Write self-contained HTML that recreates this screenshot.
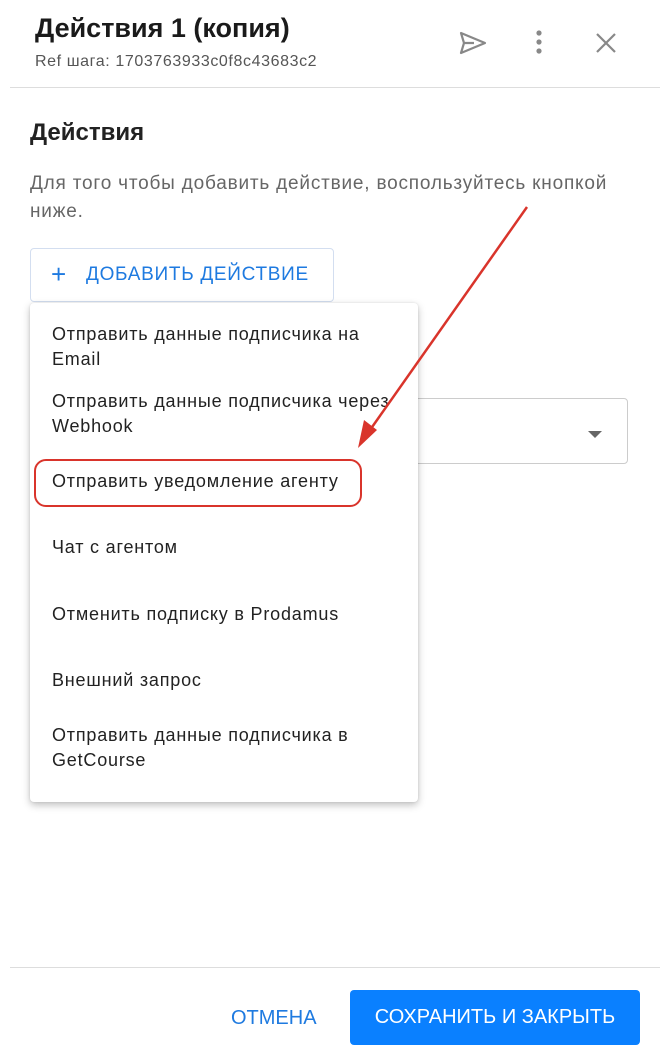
<!DOCTYPE html>
<html><head><meta charset="utf-8"><style>
body{margin:0;width:668px;height:1064px;background:#fff;font-family:"Liberation Sans",Arial,sans-serif;position:relative;overflow:hidden}
.a{position:absolute;white-space:nowrap}
.mi{position:absolute;left:52px;font-size:18px;letter-spacing:0.8px;color:#222;line-height:25px;white-space:nowrap}
</style></head><body>
<div class="a" style="left:35px;top:13px;font-size:27px;font-weight:bold;color:#1a1a1a">Действия 1 (копия)</div>
<div class="a" style="left:35px;top:53px;font-size:16px;letter-spacing:0.6px;color:#555">Ref шага: 1703763933c0f8c43683c2</div>
<svg class="a" style="left:458px;top:30px" width="30" height="26" viewBox="0 0 30 26"><path d="M3 3 L27 13 L3 23 L6 13 Z M6 13 H16" fill="none" stroke="#888" stroke-width="2.2" stroke-linejoin="round"/></svg>
<svg class="a" style="left:533px;top:28px" width="12" height="28"><circle cx="6" cy="5" r="2.6" fill="#888"/><circle cx="6" cy="14" r="2.6" fill="#888"/><circle cx="6" cy="23" r="2.6" fill="#888"/></svg>
<svg class="a" style="left:595px;top:32px" width="22" height="22"><path d="M2 2 L20 20 M20 2 L2 20" stroke="#888" stroke-width="2.2"/></svg>
<div class="a" style="left:10px;top:87px;width:650px;height:1px;background:#ddd"></div>
<div class="a" style="left:30px;top:119px;font-size:24px;font-weight:bold;color:#222">Действия</div>
<div class="a" style="left:30px;top:170px;font-size:19px;letter-spacing:0.8px;color:#666;line-height:28px">Для того чтобы добавить действие, воспользуйтесь кнопкой<br>ниже.</div>
<div class="a" style="left:30px;top:248px;width:304px;height:54px;border:1px solid #d3def0;border-radius:4px;box-sizing:border-box"></div>
<div class="a" style="left:51px;top:261px;font-size:26px;color:#1e7ae0;line-height:26px">+</div>
<div class="a" style="left:86px;top:264px;font-size:19px;color:#1e7ae0;letter-spacing:0.7px">ДОБАВИТЬ ДЕЙСТВИЕ</div>
<div class="a" style="left:400px;top:398px;width:228px;height:66px;border:1px solid #ccc;border-radius:4px;box-sizing:border-box"></div>
<svg class="a" style="left:587px;top:430px" width="16" height="9"><path d="M1 1 H15 L8 8 Z" fill="#666"/></svg>
<div class="a" style="left:30px;top:303px;width:388px;height:499px;background:#fff;border-radius:4px;box-shadow:0 3px 8px rgba(0,0,0,.25),0 0 2px rgba(0,0,0,.1)"></div>
<div class="mi" style="top:322px">Отправить данные подписчика на<br>Email</div>
<div class="mi" style="top:389px">Отправить данные подписчика через<br>Webhook</div>
<div class="mi" style="top:469px">Отправить уведомление агенту</div>
<div class="mi" style="top:535px">Чат с агентом</div>
<div class="mi" style="top:602px">Отменить подписку в Prodamus</div>
<div class="mi" style="top:668px">Внешний запрос</div>
<div class="mi" style="top:723px">Отправить данные подписчика в<br>GetCourse</div>
<div class="a" style="left:34px;top:459px;width:328px;height:48px;border:2.5px solid #d9342b;border-radius:12px;box-sizing:border-box"></div>
<svg class="a" style="left:0;top:0" width="668" height="1064"><path d="M527 207 L370 430" stroke="#d9342b" stroke-width="2.5"/><path d="M358 448 L364 420 L377 430 Z" fill="#d9342b"/></svg>
<div class="a" style="left:10px;top:967px;width:650px;height:1px;background:#ddd"></div>
<div class="a" style="left:231px;top:1007px;font-size:20px;color:#1e7ae0">ОТМЕНА</div>
<div class="a" style="left:350px;top:990px;width:290px;height:55px;background:#0a80ff;border-radius:4px;color:#fff;font-size:20px;line-height:55px;text-align:center">СОХРАНИТЬ И ЗАКРЫТЬ</div>
</body></html>
